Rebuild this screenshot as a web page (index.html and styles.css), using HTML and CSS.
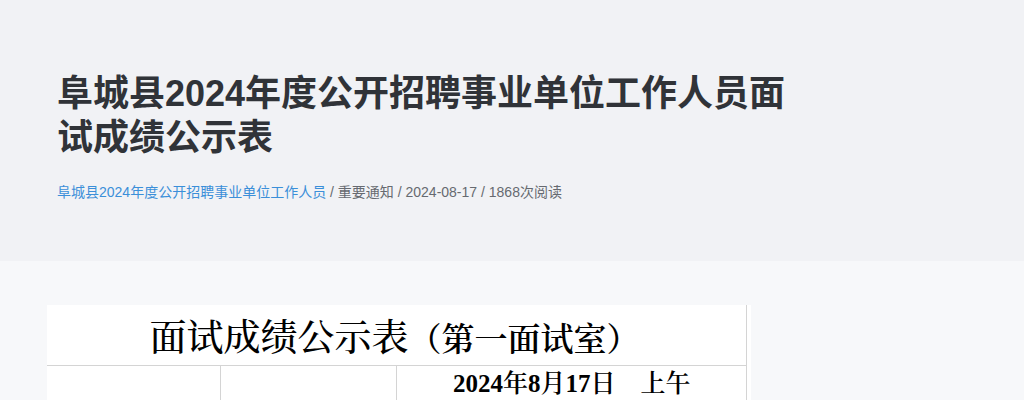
FILE: index.html
```html
<!DOCTYPE html>
<html lang="zh-CN">
<head>
<meta charset="utf-8">
<title>面试成绩公示表</title>
<link rel="stylesheet" href="styles.css">
</head>
<body>
<header class="hero">
  <div class="hero-inner">
    <h1 class="title">阜城县2024年度公开招聘事业单位工作人员面试成绩公示表</h1>
    <div class="meta"><a class="meta-link" href="#">阜城县2024年度公开招聘事业单位工作人员</a> / 重要通知 / 2024-08-17 / 1868次阅读</div>
  </div>
</header>
<main class="content">
  <div class="sheet">
    <table class="score">
      <tr><td class="cap" colspan="4">面试成绩公示表<span class="sub">（第一面试室）</span></td></tr>
      <tr class="row2"><td class="c1"></td><td class="c2"></td><td class="c3" colspan="2">2024年8月17日&emsp;上午</td></tr>
    </table>
  </div>
</main>
</body>
</html>
```
FILE: styles.css
```css
html, body { margin: 0; padding: 0; }
body {
  background: #f7f8fa;
  font-family: "Liberation Sans", "Noto Sans CJK SC", sans-serif;
  color: #333;
}
.hero {
  background: #f1f2f5;
  height: 261px;
  box-sizing: border-box;
  padding: 72px 0 0 57px;
}
.hero-inner { width: 745px; }
.title {
  margin: 0;
  font-size: 36px;
  line-height: 44px;
  font-weight: 700;
  color: #303338;
  font-family: "Liberation Sans", "Noto Sans CJK SC", sans-serif;
}
.meta {
  margin-top: 22px;
  font-size: 14px;
  line-height: 20px;
  color: #666a70;
}
.meta-link { color: #3b8fd9; text-decoration: none; }
.content { padding: 44px 0 0 47px; }
.sheet {
  width: 704px;
  background: #fff;
}
.score {
  width: 700px;
  border-collapse: collapse;
  font-family: "Liberation Serif", "Noto Serif CJK SC", serif;
  color: #000;
}
.score td { border: 1px solid #d4d4d4; padding: 0; }
.score tr:first-child td { border-top: none; border-left: none; }
.score tr td:first-child { border-left: none; }
.cap {
  height: 60px;
  text-align: center;
  font-size: 37px;
  font-weight: 500;
  padding-right: 4px !important;
}
.sub { font-size: 33px; font-weight: 600; }
.row2 td { height: 40px; vertical-align: top; }
.c1 { width: 173px; }
.c2 { width: 175px; }
.c3 { font-size: 25px; font-weight: 600; line-height: 32px; padding: 2px 0 0 56px !important; }
```
